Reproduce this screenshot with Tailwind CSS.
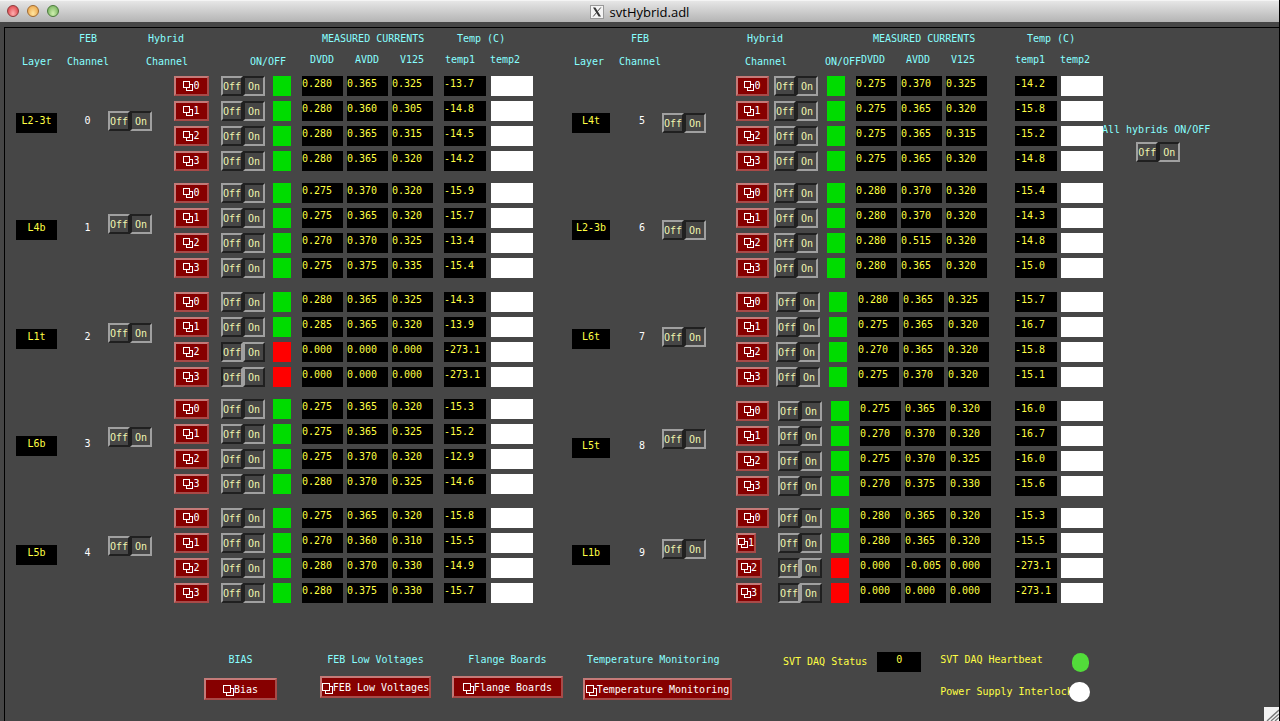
<!DOCTYPE html>
<html lang="en">
<head>
<meta charset="utf-8">
<title>svtHybrid.adl</title>
<script src="https://cdn.jsdelivr.net/npm/@tailwindcss/browser@4"></script>
</head>
<body class="bg-[#464646]">
<div class="relative flex min-h-screen w-full flex-col overflow-hidden border-r border-black bg-[#464646] font-['DejaVu_Sans_Mono',monospace] text-[10px] leading-4 whitespace-nowrap">

  <header class="relative flex h-[22px] shrink-0 items-center justify-center gap-1.5 border-t border-[#f4f4f4] bg-linear-to-b from-[#e6e6e6] to-[#b4b4b4]">
    <div class="absolute top-1 left-[7px] flex gap-2">
      <button aria-label="Close" class="size-3 rounded-full border border-[#8c3a3a] bg-radial-[at_50%_75%] from-[#ffb0b0] to-[#d83038]"></button>
      <button aria-label="Minimize" class="size-3 rounded-full border border-[#a06a30] bg-radial-[at_50%_75%] from-[#ffe6a0] to-[#e89a3c]"></button>
      <button aria-label="Zoom" class="size-3 rounded-full border border-[#4a7a3c] bg-radial-[at_50%_75%] from-[#d0f0b0] to-[#68a850]"></button>
    </div>
    <svg class="size-3.5" viewBox="0 0 14 14" aria-hidden="true"><rect x=".5" y=".5" width="13" height="13" fill="#f4f4f4" stroke="#999"/><path d="M3 2.5h2.4l5.600 9H8.600z" fill="#333"/><path d="M10.800 2.500 3.200 11.500" stroke="#444" stroke-width="1"/></svg>
    <h1 class="font-['Open_Sans',sans-serif] text-[13px] leading-5 text-black">svtHybrid.adl</h1>
  </header>

  <main class="mt-[5px] ml-1 flex grow flex-col border-t border-l border-black">
    <div class="flex items-start">
      <section id="left" class="w-[556px] shrink-0" aria-label="FEB channels 0 to 4"></section>
      <section id="right" class="relative z-10 w-[542px] shrink-0" aria-label="FEB channels 5 to 9"></section>
      <aside class="-ml-px flex flex-col items-center gap-1 pt-[94px]">
        <h2 class="text-[#8ff]">All hybrids ON/OFF</h2>
        <div id="all" class="flex w-full justify-center pl-1"></div>
      </aside>
    </div>

    <footer class="mt-11 flex items-start pl-[199px] text-[#8ff]">
      <div class="flex w-[73px] flex-col items-center gap-2.5">
        <span>BIAS</span>
        <button class="flex h-[22px] w-full items-center justify-center overflow-hidden border-2 border-t-[#c47a78] border-r-[#a84a48] border-b-[#a84a48] border-l-[#c47a78] bg-[#860000] pt-0.5 text-white"><svg class="size-[11px] shrink-0" viewBox="0 0 11 11" fill="none" stroke="#fff" shape-rendering="crispEdges" aria-hidden="true"><path d="M.5.5h7v7h-7zM8 3.5h2.5v7h-7V8"/></svg>Bias</button>
      </div>
      <div class="ml-[43px] flex w-[111px] flex-col items-center gap-2">
        <span>FEB Low Voltages</span>
        <button class="flex h-[22px] w-full items-center justify-center overflow-hidden border-2 border-t-[#c47a78] border-r-[#a84a48] border-b-[#a84a48] border-l-[#c47a78] bg-[#860000] pt-0.5 text-white"><svg class="size-[11px] shrink-0" viewBox="0 0 11 11" fill="none" stroke="#fff" shape-rendering="crispEdges" aria-hidden="true"><path d="M.5.5h7v7h-7zM8 3.5h2.5v7h-7V8"/></svg>FEB Low Voltages</button>
      </div>
      <div class="ml-[21px] flex w-[111px] flex-col items-center gap-2">
        <span>Flange Boards</span>
        <button class="flex h-[22px] w-full items-center justify-center overflow-hidden border-2 border-t-[#c47a78] border-r-[#a84a48] border-b-[#a84a48] border-l-[#c47a78] bg-[#860000] pt-0.5 text-white"><svg class="size-[11px] shrink-0" viewBox="0 0 11 11" fill="none" stroke="#fff" shape-rendering="crispEdges" aria-hidden="true"><path d="M.5.5h7v7h-7zM8 3.5h2.5v7h-7V8"/></svg>Flange Boards</button>
      </div>
      <div class="ml-5 flex w-[149px] flex-col items-start gap-2.5">
        <span class="pl-1">Temperature Monitoring</span>
        <button class="flex h-[22px] w-full items-center justify-center overflow-hidden border-2 border-t-[#c47a78] border-r-[#a84a48] border-b-[#a84a48] border-l-[#c47a78] bg-[#860000] pt-0.5 text-white"><svg class="size-[11px] shrink-0" viewBox="0 0 11 11" fill="none" stroke="#fff" shape-rendering="crispEdges" aria-hidden="true"><path d="M.5.5h7v7h-7zM8 3.5h2.5v7h-7V8"/></svg>Temperature Monitoring</button>
      </div>
      <div class="ml-[51px] flex items-start gap-2.5 text-[#ff4]">
        <span class="pt-0.5">SVT DAQ Status</span>
        <output class="h-5 w-11 bg-black text-center">0</output>
      </div>
      <div class="ml-[19px] flex flex-col gap-2.5 text-[#ff4]">
        <div class="flex h-5 items-start gap-[29px]"><span>SVT DAQ Heartbeat</span><span class="mt-px h-[19px] w-[17px] rounded-full bg-[#52dc3a]"></span></div>
        <div class="flex h-5 items-center"><span>Power Supply Interlock</span><span class="relative -ml-1 h-5 w-[21px] rounded-full bg-white"></span></div>
      </div>
    </footer>
  </main>

  <svg class="absolute right-0 bottom-0 h-3.5 w-[15px]" viewBox="0 0 15 14" aria-hidden="true"><path d="M0 0h15v14H0z" fill="#f2f2f2"/><path d="M3 14 15 3M7 14l8-7M11 14l4-3.500" stroke="#777" stroke-width="1.300"/></svg>
</div>

<script>
const LEFT = {
  head: ['pl-[17px]', 'w-[79px]', 'w-[104px]', 'w-[60px]', 'w-[135px]'],
  body: { pad: 'pl-[11px]', layer: 'w-[41px]', num: 'w-[51px] pl-2.5', gap: 'pl-[22px]', hyb: 'w-[35px]', light: 'pl-2', temp: 'pl-[11px]', spare: 'pl-[5px]' },
  groups: [
    { layer: 'L2-3t', n: 0, drop: 'pt-[35px]', end: 'mb-[7px]', indent: 'pl-3', rows: ['0.280 0.365 0.325 -13.7', '0.280 0.360 0.305 -14.8', '0.280 0.365 0.315 -14.5', '0.280 0.365 0.320 -14.2'] },
    { layer: 'L4b', n: 1, drop: 'pt-[31px]', end: 'mb-[9px]', indent: 'pl-3', rows: ['0.275 0.370 0.320 -15.9', '0.275 0.365 0.320 -15.7', '0.270 0.370 0.325 -13.4', '0.275 0.375 0.335 -15.4'] },
    { layer: 'L1t', n: 2, drop: 'pt-[31px]', end: 'mb-[7px]', indent: 'pl-3', rows: ['0.280 0.365 0.325 -14.3', '0.285 0.365 0.320 -13.9', '0.000 0.000 0.000 -273.1', '0.000 0.000 0.000 -273.1'] },
    { layer: 'L6b', n: 3, drop: 'pt-7', end: 'mb-[9px]', indent: 'pl-3', rows: ['0.275 0.365 0.320 -15.3', '0.275 0.365 0.325 -15.2', '0.275 0.370 0.320 -12.9', '0.280 0.370 0.325 -14.6'] },
    { layer: 'L5b', n: 4, drop: 'pt-7', end: '', indent: 'pl-3', rows: ['0.275 0.365 0.320 -15.8', '0.270 0.360 0.310 -15.5', '0.280 0.370 0.330 -14.9', '0.280 0.375 0.330 -15.7'] }
  ]
};
const RIGHT = {
  head: ['pl-[13px]', 'w-[126px]', 'w-[80px]', 'w-[36px]', 'w-[154px]'],
  body: { pad: 'pl-[11px]', layer: 'w-[38px]', num: 'w-[52px] pl-3', gap: 'pl-[30px]', hyb: 'w-[33px]', light: 'pl-[9px]', temp: 'pl-7', spare: 'pl-1' },
  groups: [
    { layer: 'L4t', n: 5, drop: 'pt-[37px]', end: 'mb-[7px]', indent: 'pl-[5px]', rows: ['0.275 0.370 0.325 -14.2', '0.275 0.365 0.320 -15.8', '0.275 0.365 0.315 -15.2', '0.275 0.365 0.320 -14.8'] },
    { layer: 'L2-3b', n: 6, drop: 'pt-[37px]', end: 'mb-[9px]', indent: 'pl-[5px]', rows: ['0.280 0.370 0.320 -15.4', '0.280 0.370 0.320 -14.3', '0.280 0.515 0.320 -14.8', '0.280 0.365 0.320 -15.0'] },
    { layer: 'L6t', n: 7, drop: 'pt-[35px]', end: 'mb-[9px]', indent: 'pl-[7px]', temp: 'pl-[26px]', rows: ['0.280 0.365 0.325 -15.7', '0.275 0.365 0.320 -16.7', '0.270 0.365 0.320 -15.8', '0.275 0.370 0.320 -15.1'] },
    { layer: 'L5t', n: 8, drop: 'pt-7', end: 'mb-[7px]', indent: 'pl-[9px]', temp: 'pl-6', rows: ['0.275 0.365 0.320 -16.0', '0.270 0.370 0.320 -16.7', '0.275 0.370 0.325 -16.0', '0.270 0.375 0.330 -15.6'] },
    { layer: 'L1b', n: 9, drop: 'pt-[31px]', end: '', indent: 'pl-[9px]', temp: 'pl-6', widths: ['w-[33px]', 'w-5', 'w-[26px]', 'w-[26px]'], rows: ['0.280 0.365 0.320 -15.3', '0.280 0.365 0.320 -15.5', '0.000 -0.005 0.000 -273.1', '0.000 0.000 0.000 -273.1'] }
  ]
};
const RAISED = 'border-t-[#a0a0a0] border-l-[#a0a0a0] border-r-[#202020] border-b-[#202020]';
const SUNKEN = 'border-t-[#202020] border-l-[#202020] border-r-[#a0a0a0] border-b-[#a0a0a0]';
const toggle = (on, name) => `<div role="group" aria-label="${name}" class="flex h-5 w-11 text-[#f0f5b0]">
  <button aria-pressed="${!on}" class="flex w-[22px] items-center justify-center border-2 pt-0.5 ${on ? RAISED : SUNKEN}">Off</button>
  <button aria-pressed="${on}" class="flex w-[22px] items-center justify-center border-2 pt-0.5 ${on ? SUNKEN : RAISED}">On</button></div>`;
const icon = '<svg class="size-2.5 shrink-0" viewBox="0 0 10 10" fill="none" stroke="#fff" shape-rendering="crispEdges" aria-hidden="true"><path d="M.5.5h6v6h-6zM7 3.500h2.500v6h-6V7"/></svg>';
const box = (v, w) => `<div class="h-5 ${w} bg-black text-[#ff4]">${v}</div>`;

function head(h) {
  return `<div class="flex h-12 items-start pt-[3px] ${h[0]} text-[#8ff]">
    <div class="w-[45px] pt-[23px]">Layer</div>
    <div class="flex flex-col gap-[7px] ${h[1]}"><span class="pl-3">FEB</span><span>Channel</span></div>
    <div class="flex flex-col gap-[7px] ${h[2]}"><span class="pl-0.5">Hybrid</span><span>Channel</span></div>
    <div class="pt-[23px] ${h[3]}">ON/OFF</div>
    <div class="flex flex-col gap-[5px] ${h[4]}"><span class="pl-3">MEASURED CURRENTS</span>
      <div class="flex"><span class="w-[45px]">DVDD</span><span class="w-[45px]">AVDD</span><span>V125</span></div></div>
    <div class="flex flex-col gap-[5px]"><span class="pl-3">Temp (C)</span>
      <div class="flex"><span class="w-[45px]">temp1</span><span>temp2</span></div></div>
  </div>`;
}
function group(g, b) {
  const rows = g.rows.map((r, i) => {
    const [d, a, v, t] = r.split(' ');
    const on = d !== '0.000';
    return `<tr class="h-[25px] align-top">
      <td class="${b.gap}"><div class="${b.hyb}"><button aria-label="Hybrid ${i}" class="flex h-5 ${g.widths ? g.widths[i] : b.hyb} items-center justify-center border-2 border-t-[#c47a78] border-r-[#a84a48] border-b-[#a84a48] border-l-[#c47a78] bg-[#860000] text-white">${icon}${i}</button></div></td>
      <td class="${g.indent}">${toggle(on, 'Hybrid ' + i)}</td>
      <td class="${b.light}"><div class="h-5 w-[18px] ${on ? 'bg-[#00dc00]' : 'bg-[#ff0000]'}"></div></td>
      <td class="pl-[11px]">${box(d, 'w-[41px]')}</td>
      <td class="pl-1">${box(a, 'w-[41px]')}</td>
      <td class="pl-1">${box(v, 'w-[41px]')}</td>
      <td class="${g.temp || b.temp}">${box(t, 'w-[42px]')}</td>
      <td class="${b.spare}"><div class="h-5 w-[42px] bg-white"></div></td></tr>`;
  }).join('');
  return `<div class="flex items-start ${b.pad} ${g.end}">
    <div class="pt-[37px]"><div class="h-5 ${b.layer} bg-black text-center text-[#ff4]">${g.layer}</div></div>
    <div class="pt-[37px] text-center text-white ${b.num}">${g.n}</div>
    <div class="${g.drop}">${toggle(true, 'FEB ' + g.n)}</div>
    <table><tbody>${rows}</tbody></table></div>`;
}
for (const [id, p] of [['left', LEFT], ['right', RIGHT]])
  document.getElementById(id).innerHTML = head(p.head) + p.groups.map(g => group(g, p.body)).join('');
document.getElementById('all').innerHTML = toggle(true, 'All hybrids');
</script>
</body>
</html>
